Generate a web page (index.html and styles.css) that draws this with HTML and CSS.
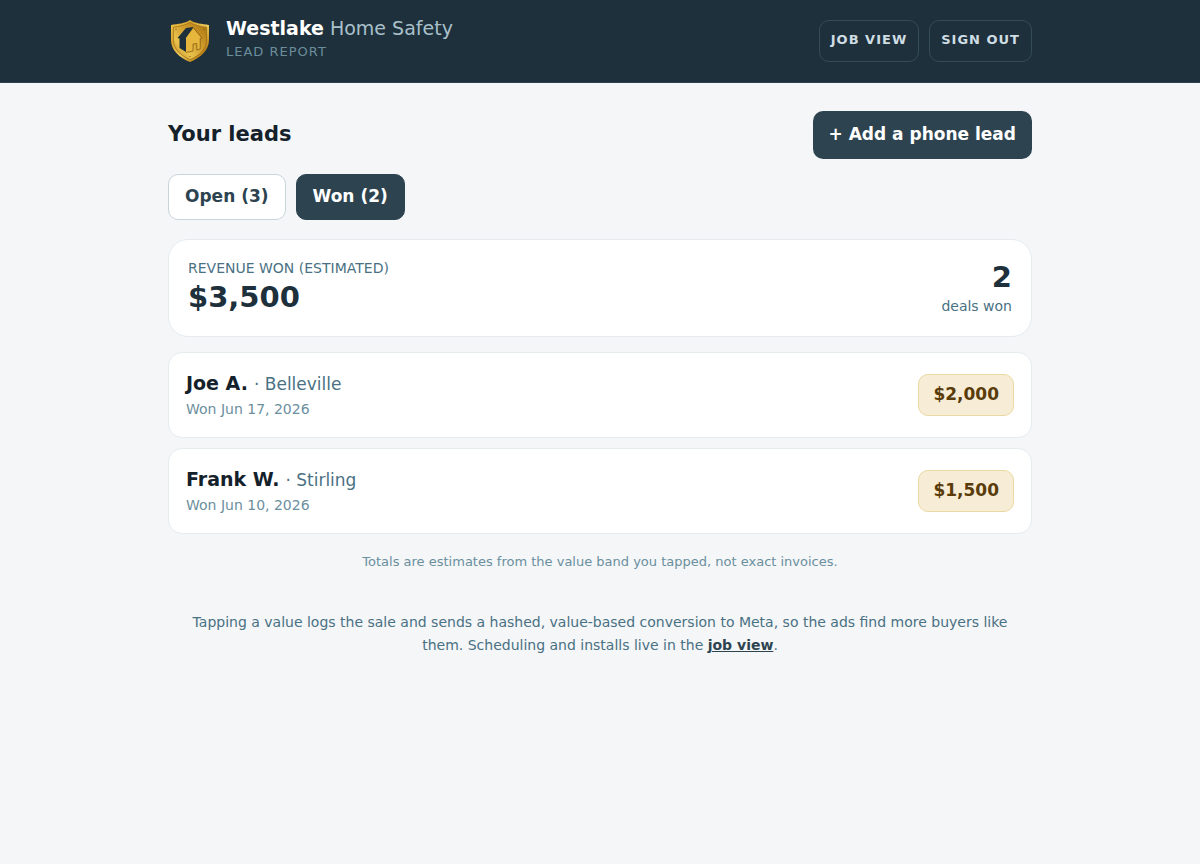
FILE: index.html
```html
<!DOCTYPE html>
<html lang="en">
<head>
    <meta charset="UTF-8">
    <meta name="viewport" content="width=device-width, initial-scale=1.0">
    <title>Lead Report - Westlake Home Safety</title>
    <link rel="stylesheet" href="styles.css">
</head>
<body>

<header class="topbar">
    <div class="container topbar-inner">
        <div class="brand">
            <svg class="brand-logo" viewBox="0 0 44 44" aria-hidden="true">
                <defs>
                    <linearGradient id="gold" x1="0" y1="0" x2="1" y2="1">
                        <stop offset="0" stop-color="#f0c54a"/>
                        <stop offset="0.3" stop-color="#dba52e"/>
                        <stop offset="0.55" stop-color="#f0cc5c"/>
                        <stop offset="0.8" stop-color="#c08416"/>
                        <stop offset="1" stop-color="#8a5a10"/>
                    </linearGradient>
                    <linearGradient id="goldInner" x1="1" y1="0" x2="0" y2="1">
                        <stop offset="0" stop-color="#a8740f"/>
                        <stop offset="0.4" stop-color="#d09c2a"/>
                        <stop offset="0.7" stop-color="#e9c24e"/>
                        <stop offset="1" stop-color="#b87f18"/>
                    </linearGradient>
                </defs>
                <path d="M22 1 C17 4.6 10 4.8 3 6 V21 C3 31 11 38.5 22 43 C33 38.5 41 31 41 21 V6 C34 4.8 27 4.6 22 1Z" fill="url(#gold)"/>
                <path d="M22 3.4 C17 6.6 11 7.4 5.4 8.2 V21 C5.4 30 12.5 36.6 22 40.6 C31.5 36.6 38.6 30 38.6 21 V8.2 C33 7.4 27 6.6 22 3.4Z" fill="url(#goldInner)" stroke="#8a5f14" stroke-width="0.6"/>
                <!-- house: dark roof and side wall, lit front with the door -->
                <path d="M9.5 19 L18 9 L25.5 8 L18 19 V33 L11.5 29 V19.5Z" fill="#1e303b"/>
                <path d="M18 19 L25.5 9.5 L33.5 19 L32 19.5 V30 L28.8 31 V24.5 L25 25 V32 L18 33.5Z" fill="#e6b73c"/>
                <path d="M25.5 9 L34 19 L32.2 19.5 V30 L28.8 31 V24.5 L25 25 V32 L18 33.5" fill="none" stroke="#7c5310" stroke-width="0.7"/>
                <circle cx="8" cy="10.5" r="0.6" fill="#79500f"/>
                <circle cx="36" cy="10.5" r="0.6" fill="#79500f"/>
                <circle cx="22" cy="37.5" r="0.6" fill="#79500f"/>
            </svg>
            <div class="brand-text">
                <div class="brand-name"><strong>Westlake</strong> Home Safety</div>
                <div class="brand-sub">Lead report</div>
            </div>
        </div>
        <nav class="topbar-nav">
            <a class="nav-btn" href="#jobs">Job view</a>
            <button class="nav-btn" type="button">Sign out</button>
        </nav>
    </div>
</header>

<main class="container">
    <div class="page-head">
        <h1>Your leads</h1>
        <button class="btn-add" type="button">+ Add a phone lead</button>
    </div>

    <div class="tabs">
        <button class="tab" type="button">Open (3)</button>
        <button class="tab active" type="button">Won (2)</button>
    </div>

    <section class="summary">
        <div>
            <div class="summary-label">Revenue won (estimated)</div>
            <div class="summary-value">$3,500</div>
        </div>
        <div class="summary-deals">
            <div class="summary-value">2</div>
            <div class="summary-caption">deals won</div>
        </div>
    </section>

    <div class="leads">
        <div class="lead">
            <div>
                <div class="lead-name"><strong>Joe A.</strong> <span>· Belleville</span></div>
                <div class="lead-date">Won Jun 17, 2026</div>
            </div>
            <div class="lead-value">$2,000</div>
        </div>
        <div class="lead">
            <div>
                <div class="lead-name"><strong>Frank W.</strong> <span>· Stirling</span></div>
                <div class="lead-date">Won Jun 10, 2026</div>
            </div>
            <div class="lead-value">$1,500</div>
        </div>
    </div>

    <p class="note">Totals are estimates from the value band you tapped, not exact invoices.</p>
    <p class="footnote">Tapping a value logs the sale and sends a hashed, value-based conversion to Meta, so the ads find more buyers like them. Scheduling and installs live in the <a href="#jobs">job view</a>.</p>
</main>

</body>
</html>
```
FILE: styles.css
```css
* {
    box-sizing: border-box;
}

body {
    margin: 0;
    background-color: #f4f6f8;
    color: #14212a;
    font-family: 'DejaVu Sans', sans-serif;
    font-size: 16px;
    line-height: 24px;
}

button {
    font-family: inherit;
    cursor: pointer;
}

.container {
    max-width: 896px;
    margin: 0 auto;
    padding: 0 16px;
}

.topbar {
    background-color: #1e303b;
    border-bottom: 1px solid #2d4450;
}

.topbar-inner {
    display: flex;
    align-items: center;
    justify-content: space-between;
    padding-top: 16px;
    padding-bottom: 16px;
}

.brand {
    display: flex;
    align-items: center;
    gap: 14px;
}

.brand-logo {
    width: 44px;
    height: 44px;
}

.brand-text {
    padding-bottom: 2px;
}

.brand-name {
    color: #a9c0cb;
    font-size: 19px;
    line-height: 24px;
}

.brand-name strong {
    color: #ffffff;
}

.brand-sub {
    color: #6b8d9c;
    font-size: 13px;
    line-height: 24px;
    letter-spacing: 1px;
    text-transform: uppercase;
}

.topbar-nav {
    display: flex;
    gap: 10px;
}

.nav-btn {
    padding: 8px 11px 10px;
    border: 1px solid #344b58;
    border-radius: 10px;
    background: none;
    color: #cfdde4;
    font-size: 13px;
    font-weight: bold;
    line-height: 22px;
    letter-spacing: 1px;
    text-transform: uppercase;
    text-decoration: none;
}

.page-head {
    display: flex;
    align-items: center;
    justify-content: space-between;
    margin-top: 28px;
}

h1 {
    margin: 0;
    padding-bottom: 2px;
    font-size: 21px;
    line-height: 28px;
}

.btn-add {
    padding: 11px 16px 13px;
    border: none;
    border-radius: 10px;
    background-color: #2d4450;
    color: #ffffff;
    font-size: 17px;
    font-weight: bold;
    line-height: 24px;
}

.tabs {
    display: flex;
    gap: 10px;
    margin-top: 15px;
}

.tab {
    padding: 9px 16px 11px;
    border: 1px solid #c8d5db;
    border-radius: 10px;
    background-color: #ffffff;
    color: #2d4450;
    font-size: 17px;
    font-weight: bold;
    line-height: 24px;
}

.tab.active {
    border-color: #2d4450;
    background-color: #2d4450;
    color: #ffffff;
}

.summary {
    display: flex;
    justify-content: space-between;
    margin-top: 19px;
    padding: 16px 19px 18px;
    border: 1px solid #e6ebee;
    border-radius: 20px;
    background-color: #ffffff;
}

.summary-label {
    color: #4a7183;
    font-size: 14px;
    line-height: 24px;
    text-transform: uppercase;
}

.summary-value {
    color: #1e303b;
    font-size: 29px;
    font-weight: bold;
    line-height: 34px;
}

.summary-deals {
    padding-top: 4px;
    text-align: right;
}

.summary-caption {
    color: #4a7183;
    font-size: 14px;
    line-height: 24px;
}

.leads {
    display: flex;
    flex-direction: column;
    gap: 10px;
    margin-top: 15px;
}

.lead {
    display: flex;
    align-items: center;
    justify-content: space-between;
    padding: 16px 17px;
    border: 1px solid #e6ebee;
    border-radius: 14px;
    background-color: #ffffff;
}

.lead-name {
    font-size: 19px;
    line-height: 28px;
}

.lead-name span {
    color: #4a7183;
    font-size: 17px;
    line-height: 24px;
}

.lead-date {
    color: #6b8f9e;
    font-size: 14px;
    line-height: 24px;
}

.lead-value {
    padding: 7px 14px 9px;
    border: 1px solid #ead9a2;
    border-radius: 10px;
    background-color: #f7edd6;
    color: #5a3c0b;
    font-size: 17px;
    font-weight: bold;
}

.note {
    margin: 16px 0 0;
    color: #6b8f9e;
    font-size: 13px;
    text-align: center;
}

.footnote {
    margin: 37px 0 0;
    padding: 0 8px;
    color: #4a7183;
    font-size: 14px;
    line-height: 23px;
    text-align: center;
}

.footnote a {
    color: #2d4450;
    font-weight: bold;
}
```
